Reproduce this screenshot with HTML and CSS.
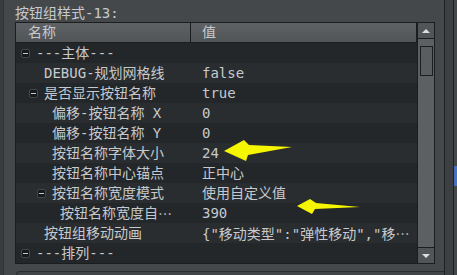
FILE: index.html
```html
<!DOCTYPE html>
<html><head>
<meta charset="utf-8">
<link rel="stylesheet" href="styles.css">
</head>
<body>
	<div id="window">
		<div id="edge-left"></div>

		<div id="panel">
			<div class="title">按钮组样式-13:</div>

			<div class="table">
				<div class="view">
					<div class="head">
						<div class="h-name">名称</div>
						<div class="h-value">值</div>
					</div>

					<div class="row">
						<div class="name l0"><span class="tog"></span>---主体---</div>
						<div class="value"></div>
					</div>
					<div class="row">
						<div class="name l1">DEBUG-规划网格线</div>
						<div class="value">false</div>
					</div>
					<div class="row">
						<div class="name l1"><span class="tog"></span>是否显示按钮名称</div>
						<div class="value">true</div>
					</div>
					<div class="row">
						<div class="name l2">偏移-按钮名称 X</div>
						<div class="value">0</div>
					</div>
					<div class="row">
						<div class="name l2">偏移-按钮名称 Y</div>
						<div class="value">0</div>
					</div>
					<div class="row">
						<div class="name l2">按钮名称字体大小</div>
						<div class="value">24</div>
					</div>
					<div class="row">
						<div class="name l2">按钮名称中心锚点</div>
						<div class="value">正中心</div>
					</div>
					<div class="row">
						<div class="name l2"><span class="tog"></span>按钮名称宽度模式</div>
						<div class="value">使用自定义值</div>
					</div>
					<div class="row">
						<div class="name l3">按钮名称宽度自<span class="ell">…</span></div>
						<div class="value">390</div>
					</div>
					<div class="row">
						<div class="name l1">按钮组移动动画</div>
						<div class="value">{"移动类型":"弹性移动","移<span class="ell">…</span></div>
					</div>
					<div class="row">
						<div class="name l0"><span class="tog"></span>---排列---</div>
						<div class="value"></div>
					</div>
				</div>

				<div class="scrollbar">
					<div class="btn up"></div>
					<div class="track"><div class="thumb"></div></div>
					<div class="btn down"></div>
				</div>
			</div>

			<div class="next"></div>
		</div>

		<div id="gutter"></div>
		<div id="edge-right"><div class="mark"></div></div>
	</div>

	<!-- the two yellow callout arrows drawn over the table -->
	<svg class="arrows" width="457" height="275" viewBox="0 0 457 275">
		<polygon points="224,151 244,140 249,145 292,147 248,155 246,161" />
		<polygon points="297,206 310,199 316,203 360,207 315,209 312,214" />
	</svg>
</body></html>
```

FILE: styles.css
```css
 body{
	margin: 0;
	background: #45484b;
	font-family: "DejaVu Sans Mono", "Noto Sans CJK SC", monospace;
	font-size: 14px;
	color: #c6cace;
	position: relative;
	overflow: hidden;
 }

 #window{
	display: flex;
	height: 275px;
	width: 457px;
 }

 #edge-left{
	width: 3px;
	background: #3a3d40;
	border-right: 1px solid #303336;
 }

 #panel{
	width: 429px;
	padding-left: 11px;
	display: flex;
	flex-direction: column;
 }

 .title{
	height: 17px;
	padding-top: 5px;
	line-height: 17px;
	white-space: nowrap;
 }

 .table{
	display: flex;
	width: 418px;
	height: 240px;
	border: solid 1px #1b1d1f;
	background: #222528;
 }

 .view{
	width: 401px;
	display: flex;
	flex-direction: column;
 }

 .head{
	display: flex;
	height: 19px;
	border-bottom: solid 1px #1b1d1f;
	border-right: solid 1px #1b1d1f;
	background: linear-gradient(#5e6265, #515558);
	line-height: 19px;
 }

 .h-name{
	width: 162px;
	padding-left: 12px;
	border-right: solid 1px #1b1d1f;
 }

 .h-value{
	flex: 1;
	padding-left: 11px;
 }

 .row{
	display: flex;
	height: 20px;
	line-height: 20px;
	background: #24272a;
	white-space: nowrap;
 }

 .row:nth-child(odd){
	background: #2a2d30;
 }

 .name{
	display: flex;
	align-items: center;
	width: 175px;
	box-sizing: border-box;
	overflow: hidden;
 }

 .l0{ padding-left: 20px; }
 .l1{ padding-left: 28px; }
 .l2{ padding-left: 36px; }
 .l3{ padding-left: 44px; }

 .tog{
	position: relative;
	width: 7px;
	height: 7px;
	margin-left: -15px;
	margin-right: 6px;
	background: #17191b;
	border: solid 1px #43474a;
	border-radius: 2px;
	flex: none;
 }

 .tog::after{
	content: "";
	position: absolute;
	left: 1px;
	top: 3px;
	width: 5px;
	height: 1px;
	background: #c4c8cc;
 }

 .value{
	flex: 1;
	padding-left: 11px;
	overflow: hidden;
 }

 .ell{
	font-family: "Noto Sans CJK SC", sans-serif;
 }

 .scrollbar{
	width: 16px;
	border-left: solid 1px #1b1d1f;
	display: flex;
	flex-direction: column;
	background: #5c6063;
 }

 .btn{
	height: 15px;
	background: #515558;
	display: flex;
	align-items: center;
	justify-content: center;
 }

 .up{
	border-bottom: solid 1px #1b1d1f;
 }

 .down{
	border-top: solid 1px #1b1d1f;
 }

 .up::after{
	content: "";
	border-left: 4px solid transparent;
	border-right: 4px solid transparent;
	border-bottom: 4px solid #dcdfe2;
 }

 .down::after{
	content: "";
	border-left: 4px solid transparent;
	border-right: 4px solid transparent;
	border-top: 4px solid #dcdfe2;
 }

 .track{
	flex: 1;
	padding: 7px 1px 0 2px;
 }

 .thumb{
	height: 28px;
	border: solid 1px #1b1d1f;
	background: #595d60;
 }

 .next{
	flex: 1;
	margin-top: 7px;
	margin-left: 1px;
	border-top: solid 1px #2a2d30;
	border-left: solid 1px #2a2d30;
	border-top-left-radius: 4px;
	background: #424548;
 }

 #gutter{
	width: 8px;
	background: #3d4043;
	border-left: solid 1px #1e2022;
	border-right: solid 1px #1e2022;
 }

 #edge-right{
	flex: 1;
	background: #45484b;
 }

 .mark{
	margin-top: 166px;
	height: 20px;
	background: #4a70bd;
 }

 .arrows{
	position: absolute;
	left: 0;
	top: 0;
 }

 .arrows polygon{
	fill: #f6f600;
 }
```
